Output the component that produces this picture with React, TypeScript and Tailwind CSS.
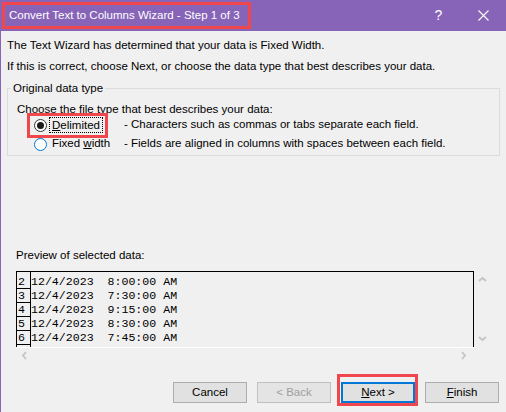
const rows = [
  { n: '2', text: '12/4/2023  8:00:00 AM' },
  { n: '3', text: '12/4/2023  7:30:00 AM' },
  { n: '4', text: '12/4/2023  9:15:00 AM' },
  { n: '5', text: '12/4/2023  8:30:00 AM' },
  { n: '6', text: '12/4/2023  7:45:00 AM' },
  { n: '', text: '' },
]

function Radio({ checked }: { checked?: boolean }) {
  if (checked) {
    return (
      <span className="flex h-[13px] w-[13px] shrink-0 items-center justify-center rounded-full border border-[#333333] bg-white">
        <span className="h-[7px] w-[7px] rounded-full bg-[#1a1a1a]" />
      </span>
    )
  }
  return <span className="h-[13px] w-[13px] shrink-0 rounded-full border border-[#0078d7] bg-white" />
}

function Chevron({ dir }: { dir: 'left' | 'right' | 'up' | 'down' }) {
  const d = {
    left: 'M5 1 L2 4.5 L5 8',
    right: 'M2 1 L5 4.5 L2 8',
    up: 'M1 5 L4.5 2 L8 5',
    down: 'M1 3 L4.5 6 L8 3',
  }[dir]
  return (
    <svg width="9" height="9" viewBox="0 0 9 9" fill="none">
      <path d={d} stroke="#c4c4c4" strokeWidth="1.8" />
    </svg>
  )
}

function Button({ children, disabled, primary }: { children: React.ReactNode; disabled?: boolean; primary?: boolean }) {
  return (
    <button
      type="button"
      className={
        primary
          ? 'flex h-[21px] w-[74px] items-center justify-center border-2 border-[#0078d7] bg-[#e1e1e1] text-black'
          : disabled
            ? 'flex h-[21px] w-[74px] items-center justify-center border border-[#bfbfbf] bg-[#e4e4e4] text-[#a0a0a0]'
            : 'flex h-[21px] w-[74px] items-center justify-center border border-[#adadad] bg-[#e1e1e1] text-black'
      }
    >
      {children}
    </button>
  )
}

export default function App() {
  return (
    <div className="flex h-[412px] w-[506px] flex-col overflow-hidden border-l border-[#8764b8] bg-[#f0f0f0] font-['Liberation_Sans',Arial,sans-serif] text-[11.5px] text-black">
      {/* title bar */}
      <div className="flex h-[31px] shrink-0 items-center bg-[#8764b8] text-white">
        <div className="ml-[1px] flex h-[27px] w-[249px] items-center whitespace-nowrap border-[3px] border-[#f0474d] pl-[4px] leading-none">
          Convert Text to Columns Wizard - Step 1 of 3
        </div>
        <div className="ml-auto flex h-full w-[45px] items-center justify-center text-[14px]">?</div>
        <div className="flex h-full w-[45px] items-center justify-center">
          <svg width="11" height="11" viewBox="0 0 11 11">
            <path d="M0.5 0.5 L10.5 10.5 M10.5 0.5 L0.5 10.5" stroke="white" strokeWidth="1.1" />
          </svg>
        </div>
      </div>

      <div className="flex flex-col pl-[6px]">
        <div className="mt-[4px] h-[20px] leading-[20px]">
          The Text Wizard has determined that your data is Fixed Width.
        </div>
        <div className="mt-[1px] h-[20px] leading-[20px]">
          If this is correct, choose Next, or choose the data type that best describes your data.
        </div>

        <fieldset className="mt-[5px] w-[493px] border border-[#dcdcdc] pb-[2px]">
          <legend className="ml-[3px] px-[2px] leading-[14px]">Original data type</legend>
          <div className="mt-[6px] h-[16px] pl-[9px] leading-[16px]">
            Choose the file type that best describes your data:
          </div>
          <div className="grid h-[16px] grid-cols-[116px_1fr] grid-rows-[16px] items-center">
            <div className="flex items-center pl-[19px]">
              <span className="flex h-[25px] items-center border-[3px] border-[#f0474d] pl-[4px] pr-[2px]">
                <Radio checked />
                <span className="ml-[2px] border border-dotted border-black px-[2px] leading-[14px]">
                  <span className="underline">D</span>elimited
                </span>
              </span>
            </div>
            <div>- Characters such as commas or tabs separate each field.</div>
          </div>
          <div className="mt-[2px] grid h-[18px] grid-cols-[116px_1fr] grid-rows-[18px] items-center">
            <div className="flex items-center pl-[26px]">
              <Radio />
              <span className="ml-[5px]">
                Fixed <span className="underline">w</span>idth
              </span>
            </div>
            <div>- Fields are aligned in columns with spaces between each field.</div>
          </div>
        </fieldset>

        <div className="ml-[9px] mt-[91px] h-[16px] leading-[16px]">Preview of selected data:</div>

        {/* preview */}
        <div className="ml-[9px] mt-[8px] flex h-[92px] w-[474px]">
          <div className="flex w-[458px] flex-col">
            <div className="flex h-[76px] overflow-hidden border-r border-t border-black font-['Liberation_Mono','Courier_New',monospace] text-[11.6px]">
              <div className="flex w-[15px] shrink-0 flex-col border-l border-r border-black pt-[3px]">
                {rows.map((r, i) => (
                  <div key={i} className="h-[14px] shrink-0 border-b border-black pl-[1px] leading-[13px]">
                    {r.n}
                  </div>
                ))}
              </div>
              <div className="flex flex-col pt-[3px]">
                {rows.map((r, i) => (
                  <div key={i} className="h-[14px] shrink-0 whitespace-pre leading-[13px]">
                    {r.text}
                  </div>
                ))}
              </div>
            </div>
            <div className="flex h-[16px] items-center justify-between border-t border-white pl-[5px] pr-[5px]">
              <Chevron dir="left" />
              <Chevron dir="right" />
            </div>
          </div>
          <div className="flex h-[76px] w-[16px] flex-col items-center justify-between pb-[4px] pt-[5px]">
            <Chevron dir="up" />
            <Chevron dir="down" />
          </div>
        </div>
      </div>

      {/* buttons */}
      <div className="mt-[19px] flex justify-end gap-[10px] pr-[7px]">
        <Button>Cancel</Button>
        <Button disabled>&lt; Back</Button>
        <div className="relative">
          <Button primary>
            <span className="underline">N</span>ext &gt;
          </Button>
          <span className="pointer-events-none absolute -bottom-[3px] -left-[4px] -right-[3px] -top-[8px] border-[3px] border-[#f0474d]" />
        </div>
        <Button>
          <span className="underline">F</span>inish
        </Button>
      </div>
    </div>
  )
}
